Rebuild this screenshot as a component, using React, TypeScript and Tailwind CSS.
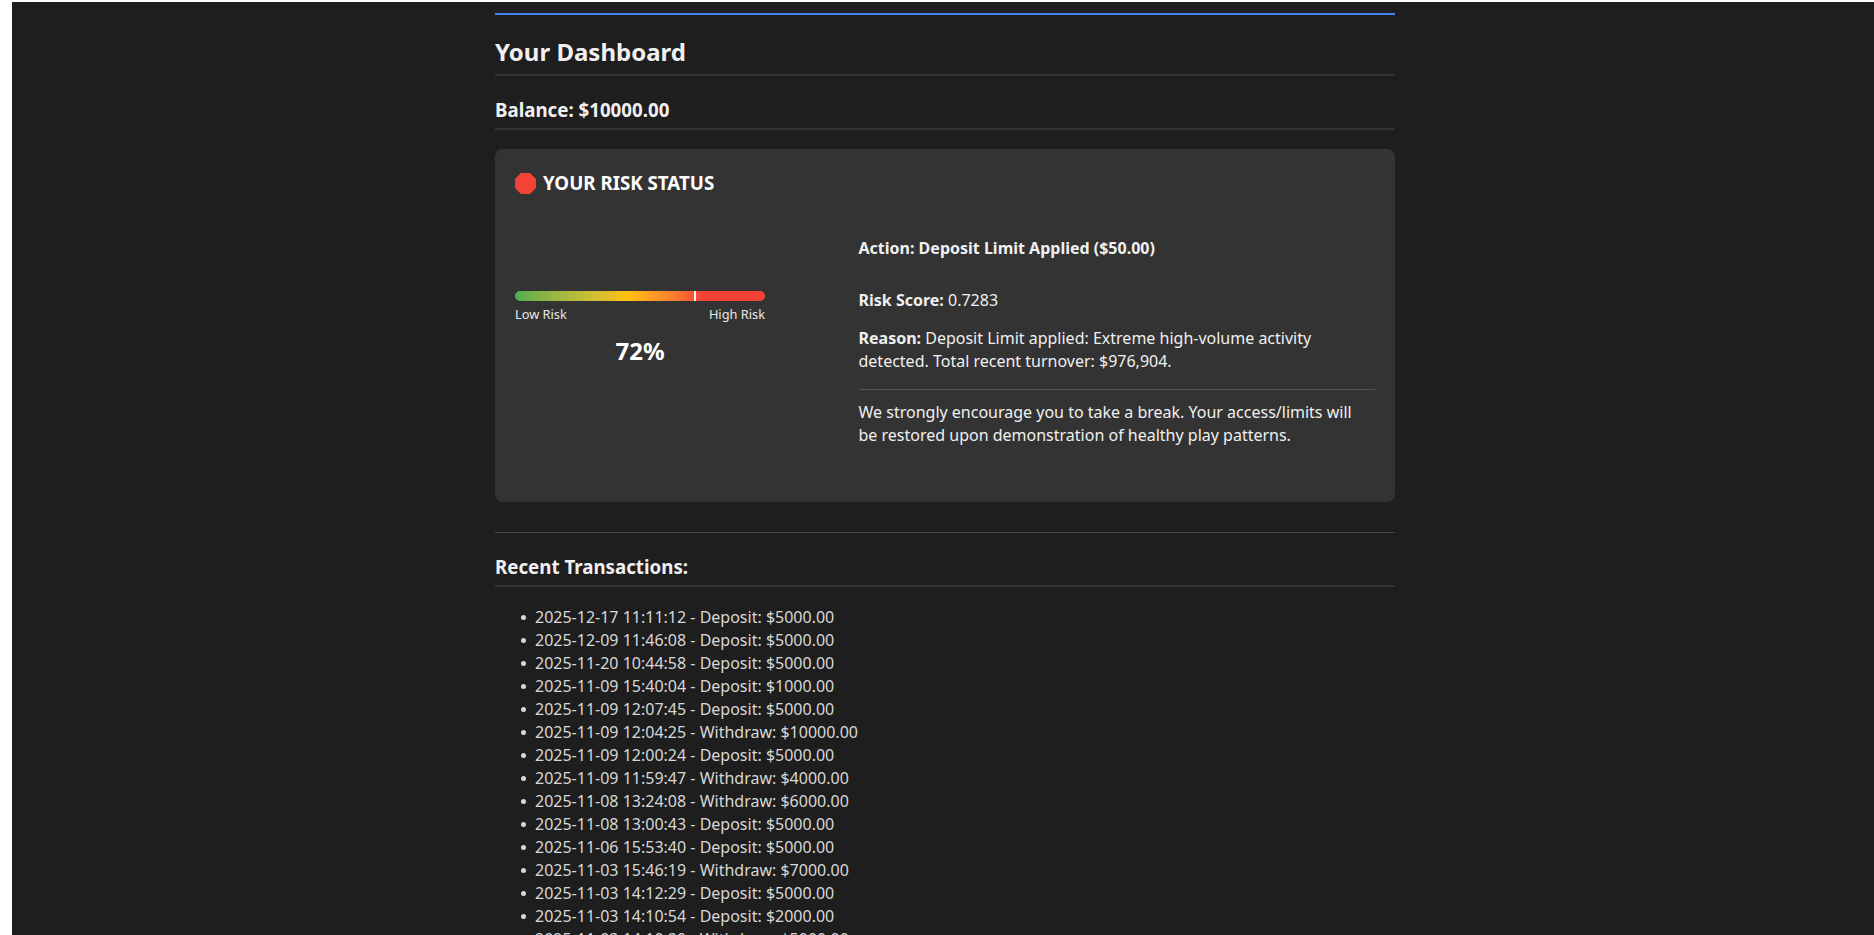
const transactions = [
  '2025-12-17 11:11:12 - Deposit: $5000.00',
  '2025-12-09 11:46:08 - Deposit: $5000.00',
  '2025-11-20 10:44:58 - Deposit: $5000.00',
  '2025-11-09 15:40:04 - Deposit: $1000.00',
  '2025-11-09 12:07:45 - Deposit: $5000.00',
  '2025-11-09 12:04:25 - Withdraw: $10000.00',
  '2025-11-09 12:00:24 - Deposit: $5000.00',
  '2025-11-09 11:59:47 - Withdraw: $4000.00',
  '2025-11-08 13:24:08 - Withdraw: $6000.00',
  '2025-11-08 13:00:43 - Deposit: $5000.00',
  '2025-11-06 15:53:40 - Deposit: $5000.00',
  '2025-11-03 15:46:19 - Withdraw: $7000.00',
  '2025-11-03 14:12:29 - Deposit: $5000.00',
  '2025-11-03 14:10:54 - Deposit: $2000.00',
  '2025-11-03 14:10:30 - Withdraw: $5000.00',
];

function StopSign() {
  return (
    <svg viewBox="0 0 21 21" className="w-[21px] h-[21px] shrink-0">
      <polygon
        points="6,0 15,0 21,6 21,15 15,21 6,21 0,15 0,6"
        fill="#f44336"
      />
    </svg>
  );
}

function RiskMeter() {
  return (
    <div className="w-[250px] shrink-0 mt-[54px]">
      <div className="relative h-[10px] rounded-[5px] bg-linear-to-r from-[#4caf50] via-[#ffc107] via-45% to-[#f44336] to-75%">
        <div className="absolute top-0 left-[72%] w-[2px] h-full -translate-x-1/2 bg-white" />
      </div>
      <div className="flex flex-row justify-between mt-[4px] text-[12.8px] leading-[19px] text-[#e8e8e8]">
        <span>Low Risk</span>
        <span>High Risk</span>
      </div>
      <div className="text-center mt-[8px] text-[24px] leading-[38px] font-bold text-white">
        72%
      </div>
    </div>
  );
}

export default function App() {
  return (
    <div className="h-screen overflow-hidden bg-white pl-[12px] pt-[2px] font-['Noto_Sans',sans-serif]">
      <div className="h-full bg-[#1e1e1e] pl-[4px] text-[#e0e0e0]">
        <div className="w-[900px] mx-auto">
          <div className="pt-[11px] border-b-2 border-[#4285f4]" />

          <h2 className="mt-[18px] pb-[3px] text-[24px] leading-[38px] font-bold text-[#f0f0f0] border-b-2 border-[#333333]">
            Your Dashboard
          </h2>
          <h3 className="mt-[19px] pb-[3px] text-[18.72px] leading-[30px] font-bold text-[#f0f0f0] border-b-2 border-[#333333]">
            Balance: $10000.00
          </h3>

          <div className="mt-[19px] rounded-[8px] bg-[#333333] p-[20px]">
            <div className="flex flex-row items-center gap-[7px] text-[18.72px] leading-[28px] font-bold text-white">
              <StopSign />
              YOUR RISK STATUS
            </div>

            <div className="flex flex-row items-start gap-[93.5px] mt-[40px]">
              <RiskMeter />
              <div className="flex-1 pb-[35px] text-[16px] leading-[23px] text-[#f0f0f0]">
                <p className="font-bold">
                  Action: Deposit Limit Applied ($50.00)
                </p>
                <p className="mt-[29px]">
                  <b>Risk Score:</b> 0.7283
                </p>
                <p className="mt-[15px]">
                  <b>Reason:</b> Deposit Limit applied: Extreme high-volume
                  activity detected. Total recent turnover: $976,904.
                </p>
                <div className="mt-[16px] mb-[11px] border-t border-[#555555]" />
                <p className="pr-[10px]">
                  We strongly encourage you to take a break. Your access/limits
                  will be restored upon demonstration of healthy play patterns.
                </p>
              </div>
            </div>
          </div>

          <div className="mt-[30px] border-t border-[#444444]" />

          <h3 className="mt-[19px] pb-[3px] text-[18.72px] leading-[30px] font-bold text-[#f0f0f0] border-b-2 border-[#333333]">
            Recent Transactions:
          </h3>

          <ul className="mt-[19px] pl-[40px] text-[16px] leading-[23px] text-[#d8d8d8]">
            {transactions.map((tx) => (
              <li
                key={tx}
                className="relative before:absolute before:left-[-14px] before:top-[9px] before:w-[5px] before:h-[5px] before:rounded-full before:bg-[#d8d8d8]">
                {tx}
              </li>
            ))}
          </ul>
        </div>
      </div>
    </div>
  );
}
